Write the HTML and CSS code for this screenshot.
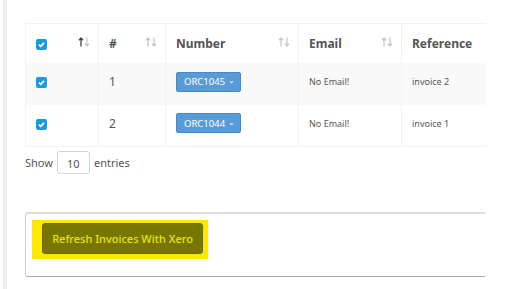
FILE: index.html
```html
<!DOCTYPE html>
<html lang="en">
<head>
    <meta charset="UTF-8">
    <title>Invoices</title>
    <link rel="stylesheet" href="styles.css">
</head>
<body>
    <div class="layout">
        <div class="rail"></div>
        <main class="content">
            <table class="invoices">
                <thead>
                    <tr>
                        <th class="col-check">
                            <span class="check"><svg viewBox="0 0 11 11"><path d="M3 5.6 L4.8 7.3 L8 3.9" fill="none" stroke="#fff" stroke-width="1.6"/></svg></span>
                            <svg class="sort" viewBox="0 0 12 10"><path class="up active" d="M3 9.5V1M1 3.2L3 1L5 3.2"/><path class="down" d="M9 0.5V9M7 6.8L9 9L11 6.8"/></svg>
                        </th>
                        <th class="col-num">#
                            <svg class="sort" viewBox="0 0 12 10"><path class="up" d="M3 9.5V1M1 3.2L3 1L5 3.2"/><path class="down" d="M9 0.5V9M7 6.8L9 9L11 6.8"/></svg>
                        </th>
                        <th class="col-number">Number
                            <svg class="sort" viewBox="0 0 12 10"><path class="up" d="M3 9.5V1M1 3.2L3 1L5 3.2"/><path class="down" d="M9 0.5V9M7 6.8L9 9L11 6.8"/></svg>
                        </th>
                        <th class="col-email">Email
                            <svg class="sort" viewBox="0 0 12 10"><path class="up" d="M3 9.5V1M1 3.2L3 1L5 3.2"/><path class="down" d="M9 0.5V9M7 6.8L9 9L11 6.8"/></svg>
                        </th>
                        <th class="col-ref">Reference</th>
                    </tr>
                </thead>
                <tbody>
                    <tr class="odd">
                        <td><span class="check"><svg viewBox="0 0 11 11"><path d="M3 5.6 L4.8 7.3 L8 3.9" fill="none" stroke="#fff" stroke-width="1.6"/></svg></span></td>
                        <td class="num">1</td>
                        <td><button class="orc">ORC1045 <span class="caret">⌄</span></button></td>
                        <td class="small">No Email!</td>
                        <td class="small">invoice 2</td>
                    </tr>
                    <tr>
                        <td><span class="check"><svg viewBox="0 0 11 11"><path d="M3 5.6 L4.8 7.3 L8 3.9" fill="none" stroke="#fff" stroke-width="1.6"/></svg></span></td>
                        <td class="num">2</td>
                        <td><button class="orc">ORC1044 <span class="caret">⌄</span></button></td>
                        <td class="small">No Email!</td>
                        <td class="small">invoice 1</td>
                    </tr>
                </tbody>
            </table>

            <div class="length">
                Show <span class="select">10</span> entries
            </div>

            <div class="card">
                <span class="highlight"><button class="refresh">Refresh Invoices With Xero</button></span>
            </div>
        </main>
    </div>
</body>
</html>
```

FILE: styles.css
```css
* {
    margin: 0;
    padding: 0;
    box-sizing: border-box;
}

body {
    background: #fff;
    font-family: "Noto Sans", "Open Sans", sans-serif;
    color: #555;
}

.layout {
    display: flex;
    min-height: 289px;
}

.rail {
    margin-left: 3px;
    width: 4px;
    background: #eeeeee;
}

.content {
    padding: 23px 0 0 18px;
    width: 478px;
}

.invoices {
    width: 460px;
    border-collapse: collapse;
    table-layout: fixed;
}

.invoices th {
    height: 39px;
    text-align: left;
    font-size: 12px;
    font-weight: 700;
    color: #555;
    padding: 0 8px 0 10px;
    border-top: 1px solid #f2f2f2;
    border-right: 1px solid #f2f2f2;
}

.invoices th:first-child,
.invoices td:first-child {
    border-left: 1px solid #f4f4f4;
}

.invoices th:last-child,
.invoices td:last-child {
    border-right: none;
}

.col-check { width: 73px; }
.col-num { width: 67px; }
.col-number { width: 133px; }
.col-email { width: 103px; }
.col-ref { width: 84px; }

.sort {
    float: right;
    width: 12px;
    height: 10px;
    margin-top: 2px;
    fill: none;
    stroke-width: 1.3;
}

.sort .up,
.sort .down {
    stroke: #c8c8c8;
}

.sort .active {
    stroke: #444;
}

.invoices td {
    height: 42px;
    padding: 0 8px 4px 10px;
    border-right: 1px solid #f2f2f2;
    font-size: 12px;
    vertical-align: middle;
}

.invoices tr.odd td {
    background: #f9f9f9;
}

.invoices tbody tr:last-child td {
    border-bottom: 1px solid #f2f2f2;
}

.check {
    display: inline-block;
    width: 11px;
    height: 11px;
    border-radius: 2px;
    background: #1b9ae4;
    vertical-align: middle;
}

.check svg {
    display: block;
    width: 11px;
    height: 11px;
}

.num {
    color: #555;
}

.orc {
    width: 65px;
    height: 20px;
    background: #5b9bd5;
    border: 1px solid #3f8ccf;
    border-radius: 2px;
    color: #fff;
    font-family: "Noto Sans", sans-serif;
    font-size: 9.5px;
    text-align: left;
    padding-left: 7px;
}

.caret {
    font-size: 8px;
    position: relative;
    top: -2px;
}

.invoices td.small {
    font-size: 9px;
    color: #555;
    vertical-align: top;
    padding-top: 12px;
}

.length {
    margin-top: 4px;
    font-size: 11px;
    color: #555;
    display: flex;
    align-items: center;
    gap: 4px;
}

.select {
    display: inline-block;
    width: 33px;
    height: 23px;
    border: 1px solid #d4d4d4;
    border-radius: 3px;
    padding: 4px 0 0 9px;
}

.card {
    margin-top: 38px;
    width: 460px;
    height: 65px;
    border: 1px solid #cfcfcf;
    border-top: 2px solid #dcdcdc;
    border-bottom: 1px solid #aaaaaa;
    border-radius: 3px 0 0 3px;
    border-right: none;
    padding: 6px 0 0 6px;
}

.highlight {
    display: inline-block;
    background: #ffe800;
    padding: 3px 5px 5px 10px;
}

.refresh {
    display: block;
    width: 161px;
    height: 31px;
    background: #777700;
    border: 1px solid #6a6a00;
    border-radius: 3px;
    color: #e8e600;
    font-family: "Noto Sans", sans-serif;
    font-size: 11px;
    font-weight: 500;
}
```
